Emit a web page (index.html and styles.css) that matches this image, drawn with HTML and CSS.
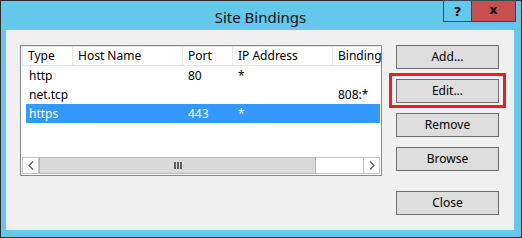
FILE: index.html
```html
<!DOCTYPE html>
<html lang="en">
<head>
    <meta charset="UTF-8">
    <title>Site Bindings</title>
    <link rel="stylesheet" href="styles.css">
</head>
<body>

    <div class="window">
        <div class="title-bar">
            <span class="title">Site Bindings</span>
            <div class="caption-buttons">
                <div class="caption-btn help-btn">?</div>
                <div class="caption-btn close-btn">x</div>
            </div>
        </div>

        <div class="client">
            <div class="list-view">
                <div class="list-header">
                    <div class="col">Type</div>
                    <div class="col">Host Name</div>
                    <div class="col">Port</div>
                    <div class="col">IP Address</div>
                    <div class="col">Binding Information</div>
                </div>
                <div class="list-rows">
                    <div class="list-row">
                        <div class="col">http</div>
                        <div class="col"></div>
                        <div class="col">80</div>
                        <div class="col">*</div>
                        <div class="col"></div>
                    </div>
                    <div class="list-row">
                        <div class="col">net.tcp</div>
                        <div class="col"></div>
                        <div class="col"></div>
                        <div class="col"></div>
                        <div class="col">808:*</div>
                    </div>
                    <div class="list-row selected">
                        <div class="col">https</div>
                        <div class="col"></div>
                        <div class="col">443</div>
                        <div class="col">*</div>
                        <div class="col"></div>
                    </div>
                </div>
                <div class="h-scroll">
                    <div class="scroll-btn">
                        <svg width="6" height="9" viewBox="0 0 6 9"><polyline points="5,0.5 1,4.5 5,8.5" fill="none" stroke="#606060" stroke-width="1.3"/></svg>
                    </div>
                    <div class="scroll-thumb">
                        <span class="grip"></span><span class="grip"></span><span class="grip"></span>
                    </div>
                    <div class="scroll-track"></div>
                    <div class="scroll-btn right">
                        <svg width="6" height="9" viewBox="0 0 6 9"><polyline points="1,0.5 5,4.5 1,8.5" fill="none" stroke="#606060" stroke-width="1.3"/></svg>
                    </div>
                </div>
            </div>

            <div class="button-column">
                <button class="btn">Add...</button>
                <button class="btn highlighted">Edit...</button>
                <button class="btn">Remove</button>
                <button class="btn">Browse</button>
                <button class="btn close">Close</button>
            </div>
        </div>
    </div>

</body>
</html>
```

FILE: styles.css
```css
body {
    margin: 0;
    font-family: "Noto Sans", "Liberation Sans", sans-serif;
    font-size: 12px;
    color: #000;
}
.window {
    position: relative;
    width: 522px;
    height: 238px;
    box-sizing: border-box;
    border: 1px solid #2b2b2b;
    background-color: #64c8ea;
    padding: 0 7px 7px 5px;
}
.title-bar {
    height: 29px;
    display: flex;
    justify-content: center;
    align-items: center;
}
.title {
    font-size: 15px;
    color: #111;
    padding-top: 2px;
    padding-left: 1px;
}
.caption-buttons {
    position: absolute;
    top: -1px;
    right: 5px;
    display: flex;
}
.caption-btn {
    height: 20px;
    border: 1px solid #2c4a58;
    display: flex;
    justify-content: center;
    align-items: center;
    font-family: "DejaVu Sans", sans-serif;
    font-weight: bold;
    font-size: 13px;
    color: #000;
}
.help-btn {
    width: 27px;
    border-right: none;
}
.close-btn {
    width: 45px;
    background-color: #c75050;
    padding-bottom: 3px;
    box-sizing: border-box;
    height: 22px;
}
.client {
    height: 200px;
    background-color: #f0f0f0;
    box-sizing: border-box;
    padding: 15px 0 0 14px;
    display: flex;
    gap: 14px;
}
.list-view {
    width: 362px;
    height: 131px;
    box-sizing: border-box;
    border: 1px solid #828790;
    background-color: #fff;
    padding: 0 1px 1px 1px;
    display: flex;
    flex-direction: column;
    overflow: hidden;
}
.list-header,
.list-row {
    display: grid;
    grid-template-columns: 50px 110px 50px 100px 120px;
    white-space: nowrap;
}
.list-header {
    height: 20px;
    box-sizing: border-box;
    border-top: 1px solid #e5e5e5;
    border-left: 1px solid #e5e5e5;
    border-bottom: 1px solid #e5e5e5;
}
.list-header .col {
    padding-left: 5px;
    border-right: 1px solid #e5e5e5;
    line-height: 18px;
    overflow: hidden;
}
.list-row {
    height: 19px;
    line-height: 19px;
    margin-left: 4px;
    grid-template-columns: 46px 110px 50px 100px 120px;
}
.list-row .col {
    padding-left: 6px;
    overflow: hidden;
}
.list-row .col:first-child {
    padding-left: 3px;
}
.list-row.selected {
    background-color: #3399ff;
    color: #fff;
}
.list-rows {
    flex: 1;
}
.h-scroll {
    height: 17px;
    display: flex;
}
.scroll-btn {
    width: 17px;
    box-sizing: border-box;
    border: 1px solid #c4c4c4;
    background-color: #fff;
    display: flex;
    justify-content: center;
    align-items: center;
}
.scroll-btn.right {
    border-left: 1px solid #c4c4c4;
}
.scroll-thumb {
    width: 277px;
    box-sizing: border-box;
    background-color: #dadada;
    border: 1px solid #b5b5b5;
    display: flex;
    justify-content: center;
    align-items: center;
    gap: 1px;
}
.grip {
    width: 2px;
    height: 7px;
    background-color: #606060;
}
.scroll-track {
    width: 47px;
    box-sizing: border-box;
    border-top: 1px solid #c4c4c4;
    border-bottom: 1px solid #c4c4c4;
    background-color: #fff;
}
.button-column {
    display: flex;
    flex-direction: column;
    gap: 10px;
}
.btn {
    position: relative;
    width: 103px;
    height: 24px;
    box-sizing: border-box;
    border: 1px solid #707070;
    background-color: #dddddd;
    font-family: "Noto Sans", "Liberation Sans", sans-serif;
    font-size: 12px;
    color: #000;
    padding: 0 0 1px 0;
}
.btn.close {
    margin-top: 10px;
}
.btn.highlighted::after {
    content: "";
    position: absolute;
    top: -7px;
    bottom: -6px;
    left: -8px;
    right: -8px;
    border: 3px solid #ed1c24;
}
```
